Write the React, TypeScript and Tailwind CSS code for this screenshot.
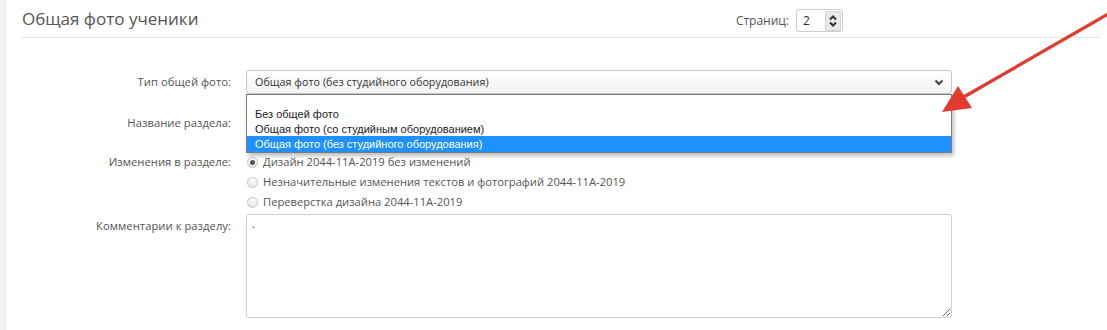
import React from "react";

const font = { fontFamily: '"Open Sans", "Noto Sans", sans-serif' };

function Radio({ checked, label }: { checked?: boolean; label: string }) {
  return (
    <div className="flex items-center h-[20px]">
      <span className="w-[11px] h-[11px] rounded-full border border-[#c4c4c4] bg-gradient-to-b from-[#fdfdfd] to-[#e6e6e6] flex items-center justify-center mr-[5px]">
        {checked && <span className="w-[5px] h-[5px] rounded-full bg-[#555]" />}
      </span>
      <span className="text-[11.2px] text-[#555]">{label}</span>
    </div>
  );
}

export default function App() {
  return (
    <div className="w-[1107px] h-[330px] bg-white flex relative overflow-hidden" style={font}>
      <div className="w-[6px] bg-[#f5f5f5] border-r border-[#ececec]" />
      <div className="flex-1 pl-[16px] pr-[7px]">
        <div className="h-[38px] border-b border-[#e5e5e5] flex items-center">
          <div className="flex-1 text-[17px] text-[#555] pt-[1px]">Общая фото ученики</div>
          <div className="flex items-center mr-[257px] pt-[4px]">
            <span className="text-[12px] text-[#555] mr-[7px]">Страниц:</span>
            <div className="w-[47px] h-[23px] border border-[#ccc] rounded-[3px] flex items-center pl-[6px] pr-[1px]">
              <span className="flex-1 text-[12px] text-[#333]">2</span>
              <div className="w-[16px] h-[20px] bg-[#e9e9e9] border border-[#d6d6d6] rounded-[2px] flex flex-col items-center justify-center">
                <svg width="10" height="18" viewBox="0 0 10 18">
                  <path d="M2 7.5 L5 4.5 L8 7.5" fill="none" stroke="#333" strokeWidth="2" />
                  <path d="M2 10.5 L5 13.5 L8 10.5" fill="none" stroke="#333" strokeWidth="2" />
                </svg>
              </div>
            </div>
          </div>
        </div>

        <div className="mt-[32px] flex items-center">
          <div className="w-[209px] text-right text-[11.3px] text-[#555]">Тип общей фото:</div>
          <div className="ml-[15px] relative w-[706px]">
            <div className="h-[24px] border border-[#c8c8c8] rounded-[3px] bg-gradient-to-b from-white to-[#f3f3f3] flex items-center pl-[8px] pr-[7px]">
              <span className="flex-1 text-[10.8px] text-[#333]">Общая фото (без студийного оборудования)</span>
              <svg width="10" height="7" viewBox="0 0 10 7">
                <path d="M1.5 1.5 L5 5 L8.5 1.5" fill="none" stroke="#444" strokeWidth="2" />
              </svg>
            </div>
            <div
              className="absolute left-0 top-[24px] w-[706px] bg-white border border-[#7a7a7a] shadow-[2px_3px_4px_rgba(0,0,0,0.25)] z-10 text-[11px] text-[#222]"
              style={{ fontFamily: '"Liberation Sans", Arial, sans-serif' }}
            >
              <div className="h-[12px]" />
              <div className="pl-[8px] h-[15px] leading-[15px]">Без общей фото</div>
              <div className="pl-[8px] h-[14px] leading-[14px]">Общая фото (со студийным оборудованием)</div>
              <div className="pl-[8px] h-[16px] leading-[16px] bg-[#1e90ff] text-white">Общая фото (без студийного оборудования)</div>
            </div>
          </div>
        </div>

        <div className="mt-[17px] flex items-center">
          <div className="w-[209px] text-right text-[11.3px] text-[#555]">Название раздела:</div>
          <div className="ml-[15px] w-[706px] h-[24px] border border-[#ccc] rounded-[3px]" />
        </div>

        <div className="mt-[17px] flex">
          <div className="w-[209px] text-right text-[11.3px] text-[#555] leading-[20px]">Изменения в разделе:</div>
          <div className="ml-[16px] flex flex-col">
            <Radio checked label="Дизайн 2044-11А-2019 без изменений" />
            <Radio label="Незначительные изменения текстов и фотографий 2044-11А-2019" />
            <Radio label="Переверстка дизайна 2044-11А-2019" />
          </div>
        </div>

        <div className="mt-[2px] flex">
          <div className="w-[209px] text-right text-[11.3px] text-[#555] pt-[4px]">Комментарии к разделу:</div>
          <textarea
            className="ml-[15px] w-[706px] h-[104px] border border-[#d0d0d0] rounded-[3px] text-[11px] text-[#333] px-[5px] py-[1px] outline-none"
            style={font}
            defaultValue="."
          />
        </div>
      </div>

      <svg className="absolute left-0 top-0 pointer-events-none z-20" width="1107" height="330" viewBox="0 0 1107 330">
        <line x1="1108" y1="14" x2="962" y2="98" stroke="#e33a2f" strokeWidth="3.2" />
        <polygon points="942,112 958,86 972,108" fill="#e33a2f" />
      </svg>
    </div>
  );
}
